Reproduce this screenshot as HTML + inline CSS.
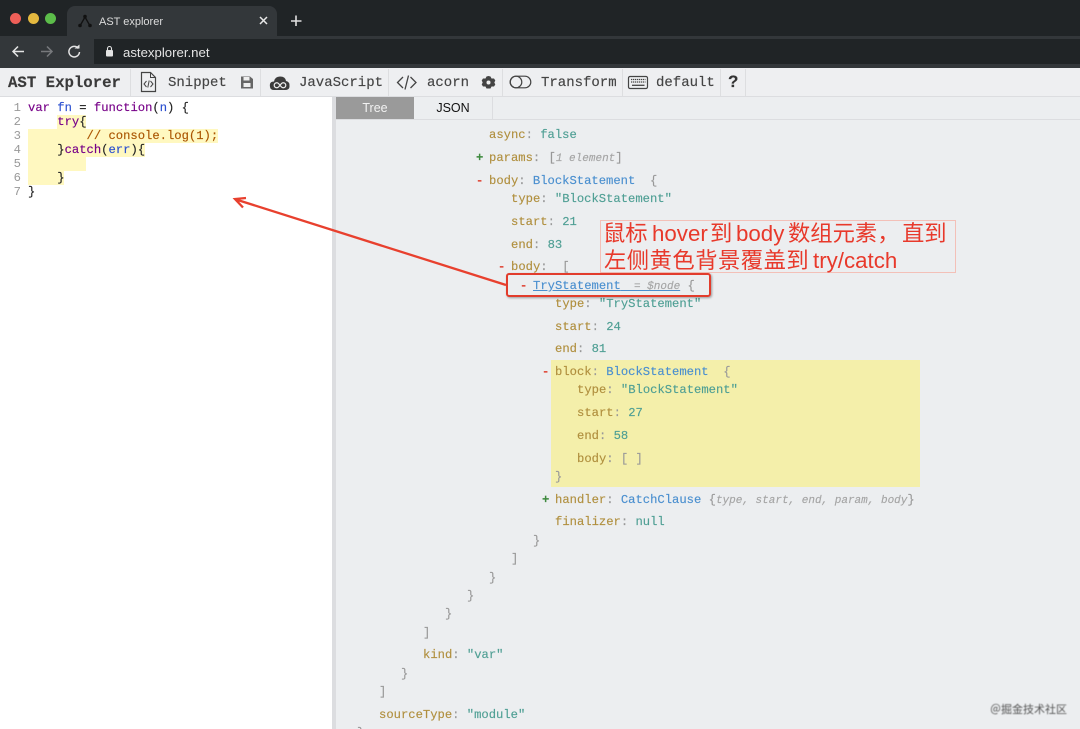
<!DOCTYPE html>
<html><head><meta charset="utf-8"><style>
html,body{margin:0;padding:0;width:1080px;height:729px;overflow:hidden}
body{position:relative;background:#eceef0;font-family:"Liberation Mono",monospace}
#w{position:absolute;left:0;top:0;width:1080px;height:729px;overflow:hidden;background:#eceef0}
#w div{position:absolute}
.l{white-space:pre;font:12.2px/16px "Liberation Mono",monospace;color:#999;margin-top:1px;-webkit-text-stroke:.15px currentColor}
.k{color:#b08f3e}.v{color:#4f9f94}.t{color:#4a8fcf}.g{color:#a3a3a3}.i{font-style:italic;color:#a5a5a5;font-size:11px}
.m,.p{position:absolute;left:-13px;font-weight:bold}
.m{color:#e04a3a}.p{color:#3f8a3f}
.c{left:28px;white-space:pre;font:12.2px/14px "Liberation Mono",monospace;color:#222;-webkit-text-stroke:.15px currentColor}
.n{width:21px;text-align:right;left:0;font:12.2px/14px "Liberation Mono",monospace;color:#999}
.h{background:#fff8c0}
.tb{top:74px;white-space:pre;font:14px/18px "Liberation Mono",monospace;color:#444;-webkit-text-stroke:.15px currentColor}
.sep{top:69px;width:1px;height:27px;background:#dddee0}
.kw{color:#708}.d{color:#2a4fd0}.cm{color:#a50}
.a{font:22.3px/26px "Liberation Sans","Noto Sans CJK SC",sans-serif;color:#e8392b;white-space:pre}
</style></head><body><div id="w">
<!-- browser chrome -->
<div style="left:0;top:0;width:1080px;height:68px;background:#202426"></div>
<div style="left:0;top:36px;width:1080px;height:3px;background:#33373a"></div>
<div style="left:0;top:64px;width:1080px;height:4px;background:#33373a"></div>
<div style="left:0;top:36px;width:94px;height:28px;background:#33373a"></div>
<div style="left:67px;top:6px;width:210px;height:33px;background:#33373a;border-radius:8px 8px 0 0"></div>
<div style="left:94px;top:39px;width:986px;height:25px;background:#202426;border-radius:12px 0 0 12px"></div>
<div style="left:10px;top:13px;width:11px;height:11px;border-radius:50%;background:#ee5f58"></div>
<div style="left:28px;top:13px;width:11px;height:11px;border-radius:50%;background:#e4b93f"></div>
<div style="left:45px;top:13px;width:11px;height:11px;border-radius:50%;background:#5cbd4a"></div>
<svg style="position:absolute;left:0;top:0" width="340" height="68" fill="none">
<path d="M85 17L80.500 25M85 17L89.500 25" stroke="#111" stroke-width="1.300"/>
<circle cx="85" cy="16.500" r="1.800" fill="#111"/><circle cx="80" cy="25.500" r="1.800" fill="#111"/><circle cx="90" cy="25.500" r="1.800" fill="#111"/>
<path d="M260 17L267 24M267 17L260 24" stroke="#e8e8e8" stroke-width="1.500"/>
<path d="M296 15.500V26M291 21H301.500" stroke="#e0e0e0" stroke-width="1.600"/>
<path d="M24 51.500H13M18 46.500L13 51.500L18 56.500" stroke="#e4e4e4" stroke-width="1.500"/>
<path d="M41 51.500H52M47 46.500L52 51.500L47 56.500" stroke="#77797c" stroke-width="1.500"/>
<path d="M78.500 48.500A5.300 5.300 0 1 0 79.500 52" stroke="#e4e4e4" stroke-width="1.500"/>
<path d="M74.500 48.500H79.500V44.500Z" fill="#e4e4e4"/>
<rect x="106" y="50" width="7" height="6.500" rx="1" fill="#e4e4e4"/>
<path d="M107.500 50V48.500A2 2 0 0 1 111.500 48.500V50" stroke="#e4e4e4" stroke-width="1.100"/>
</svg>
<div style="left:99px;top:15px;font:11px/14px 'Liberation Sans',sans-serif;color:#dcdcdc;white-space:pre">AST explorer</div>
<div style="left:123px;top:45px;font:13.2px/16px 'Liberation Sans',sans-serif;color:#e4e4e4;white-space:pre">astexplorer.net</div>

<!-- toolbar -->
<div style="left:0;top:68px;width:1080px;height:28px;background:#eeeff1;border-bottom:1px solid #dcdde0"></div>
<div class="tb" style="left:8px;top:74px;font-weight:bold;font-size:15.7px;color:#3a3a3a">AST Explorer</div>
<div class="sep" style="left:130px"></div><div class="sep" style="left:260px"></div><div class="sep" style="left:388px"></div><div class="sep" style="left:502px"></div><div class="sep" style="left:622px"></div><div class="sep" style="left:720px"></div><div class="sep" style="left:745px"></div>
<div class="tb" style="left:168px">Snippet</div>
<div class="tb" style="left:299px">JavaScript</div>
<div class="tb" style="left:427px">acorn</div>
<div class="tb" style="left:541px">Transform</div>
<div class="tb" style="left:656px">default</div>
<div class="tb" style="left:728px;top:73px;font-weight:bold;font-size:17px;font-family:'Liberation Sans',sans-serif;color:#333">?</div>
<svg style="position:absolute;left:0;top:68px" width="760" height="28" fill="none" stroke="#444">
<path d="M141.500 4.500H150.500L155.500 9.500V23.500H141.500Z" stroke-width="1.200"/><path d="M150.500 4.500V9.500H155.500" stroke-width="1"/>
<path d="M146.500 13L144 16L146.500 19M150.500 13L153 16L150.500 19M149.200 12.500L147.800 19.500" stroke-width="1"/>
<path d="M241 8.500H250L253 11V20.500H241Z" fill="#666" stroke="none"/><rect x="243.500" y="9" width="6" height="3.500" fill="#eee" stroke="none"/><rect x="243.500" y="15" width="7" height="4" fill="#eee" stroke="none"/>
<path d="M270 19Q269 13.500 274 13.500Q275 8.500 280 8.500Q285.500 8.500 286 13Q290 13.500 289.500 19Q289 22 285 22H274Q270.500 22 270 19Z" fill="#3c3c3c" stroke="none"/>
<path d="M278.500 15.500A2.500 2.500 0 1 0 278.500 19L281.500 15.500A2.500 2.500 0 1 1 281.500 19Z" stroke="#eee" stroke-width="1.200"/>
<path d="M403 9L397.500 14.500L403 20M410.500 9L416 14.500L410.500 20M408.500 7.500L405 21.500" stroke-width="1.300"/>
<path d="M488.500 8L490.500 8.500L491.500 10.500L494 10.500L495.300 12.500L494.300 14.500L495.300 16.500L494 18.500L491.500 18.500L490.500 20.500L486.500 20.500L485.500 18.500L483 18.500L481.700 16.500L482.700 14.500L481.700 12.500L483 10.500L485.500 10.500L486.500 8.500Z" fill="#444" stroke="none"/><circle cx="488.500" cy="14.500" r="2" fill="#eee" stroke="none"/>
<circle cx="516" cy="14" r="5.800" stroke-width="1.200"/><rect x="510.200" y="8.200" width="20.600" height="11.600" rx="5.800" stroke-width="1.200"/>
<rect x="628.500" y="8.500" width="19" height="12" rx="1.500" stroke-width="1.200"/>
<path d="M631 11.500H645.500M631 14H645.500" stroke-width="1.200" stroke-dasharray="1.300 .7"/><path d="M632 17.300H644.500" stroke-width="1.300"/>
</svg>

<!-- editor -->
<div style="left:0;top:97px;width:332px;height:632px;background:#fff"></div>
<div style="left:332px;top:96px;width:4px;height:633px;background:#dcdde0"></div>
<div class="h" style="left:57px;top:115px;width:29px;height:14px"></div>
<div class="h" style="left:28px;top:129px;width:190px;height:14px"></div>
<div class="h" style="left:28px;top:143px;width:117px;height:14px"></div>
<div class="h" style="left:28px;top:157px;width:58px;height:14px"></div>
<div class="h" style="left:28px;top:171px;width:36px;height:14px"></div>
<div class="n" style="top:101px">1</div><div class="n" style="top:115px">2</div><div class="n" style="top:129px">3</div><div class="n" style="top:143px">4</div><div class="n" style="top:157px">5</div><div class="n" style="top:171px">6</div><div class="n" style="top:185px">7</div>
<div class="c" style="top:101px"><span class="kw">var</span> <span class="d">fn</span> = <span class="kw">function</span>(<span class="d">n</span>) {</div>
<div class="c" style="top:115px">    <span class="kw">try</span>{</div>
<div class="c" style="top:129px">        <span class="cm">// console.log(1);</span></div>
<div class="c" style="top:143px">    }<span class="kw">catch</span>(<span class="d">err</span>){</div>
<div class="c" style="top:171px">    }</div>
<div class="c" style="top:185px">}</div>

<!-- tabs -->
<div style="left:336px;top:97px;width:78px;height:22px;background:#9a9a9a;color:#f2f2f2;font:12.5px/23px 'Liberation Sans',sans-serif;text-align:center">Tree</div>
<div style="left:414px;top:97px;width:78px;height:22px;color:#111;font:12.5px/23px 'Liberation Sans',sans-serif;text-align:center;border-right:1px solid #dcdde0">JSON</div>
<div style="left:336px;top:119px;width:744px;height:1px;background:#dcdde0"></div>
<div style="left:551px;top:360px;width:369px;height:127px;background:#f4efaa"></div>

<!-- tree -->
<div class="l" style="left:489px;top:126px"><span class="k">async</span>: <span class="v">false</span></div>
<div class="l" style="left:489px;top:149px"><span class="p">+</span><span class="k">params</span>: <span style="margin-left:1px">[</span><span class="i">1 element</span>]</div>
<div class="l" style="left:489px;top:172px"><span class="m">-</span><span class="k">body</span>: <span class="t">BlockStatement</span>  {</div>
<div class="l" style="left:511px;top:190px"><span class="k">type</span>: <span class="v">"BlockStatement"</span></div>
<div class="l" style="left:511px;top:213px"><span class="k">start</span>: <span class="v">21</span></div>
<div class="l" style="left:511px;top:236px"><span class="k">end</span>: <span class="v">83</span></div>
<div class="l" style="left:511px;top:258px"><span class="m">-</span><span class="k">body</span>:  [</div>
<div class="l" style="left:533px;top:277px"><span class="m">-</span><span class="t" style="text-decoration:underline">TryStatement</span><span class="i" style="text-decoration:underline;text-decoration-color:#4a8fcf">  = $node</span> {</div>
<div class="l" style="left:555px;top:295px"><span class="k">type</span>: <span class="v">"TryStatement"</span></div>
<div class="l" style="left:555px;top:318px"><span class="k">start</span>: <span class="v">24</span></div>
<div class="l" style="left:555px;top:340px"><span class="k">end</span>: <span class="v">81</span></div>
<div class="l" style="left:555px;top:363px"><span class="m">-</span><span class="k">block</span>: <span class="t">BlockStatement</span>  {</div>
<div class="l" style="left:577px;top:381px"><span class="k">type</span>: <span class="v">"BlockStatement"</span></div>
<div class="l" style="left:577px;top:404px"><span class="k">start</span>: <span class="v">27</span></div>
<div class="l" style="left:577px;top:427px"><span class="k">end</span>: <span class="v">58</span></div>
<div class="l" style="left:577px;top:450px"><span class="k">body</span>: [ ]</div>
<div class="l" style="left:555px;top:468px">}</div>
<div class="l" style="left:555px;top:491px"><span class="p">+</span><span class="k">handler</span>: <span class="t">CatchClause</span> {<span class="i">type, start, end, param, body</span>}</div>
<div class="l" style="left:555px;top:513px"><span class="k">finalizer</span>: <span class="v">null</span></div>
<div class="l" style="left:533px;top:532px">}</div>
<div class="l" style="left:511px;top:550px">]</div>
<div class="l" style="left:489px;top:569px">}</div>
<div class="l" style="left:467px;top:587px">}</div>
<div class="l" style="left:445px;top:605px">}</div>
<div class="l" style="left:423px;top:624px">]</div>
<div class="l" style="left:423px;top:646px"><span class="k">kind</span>: <span class="v">"var"</span></div>
<div class="l" style="left:401px;top:665px">}</div>
<div class="l" style="left:379px;top:683px">]</div>
<div class="l" style="left:379px;top:706px"><span class="k">sourceType</span>: <span class="v">"module"</span></div>
<div class="l" style="left:357px;top:724px">}</div>

<!-- annotations -->
<div style="left:600px;top:220px;width:354px;height:51px;border:1px solid #f3c0b8"></div>
<div class="a" style="left:603px;top:221px">鼠标</div>
<div class="a" style="left:652px;top:221px">hover</div>
<div class="a" style="left:710px;top:221px">到</div>
<div class="a" style="left:736px;top:221px">body</div>
<div class="a" style="left:788px;top:221px">数组元素，</div>
<div class="a" style="left:902px;top:221px">直到</div>
<div class="a" style="left:604px;top:248px;letter-spacing:.5px">左侧黄色背景覆盖到</div>
<div class="a" style="left:813px;top:248px">try/catch</div>
<div style="left:506px;top:273px;width:201px;height:20px;border:2.5px solid #e23c2c;border-radius:3px;box-shadow:1px 1px 2px rgba(0,0,0,.35)"></div>
<svg style="position:absolute;left:0;top:0" width="1080" height="729" fill="none">
<path d="M506 285L236 199.500M246 198L235 199L243 207.500" stroke="#e8402e" stroke-width="2.300"/>
</svg>
<div style="left:990px;top:703px;font:11px/14px 'Liberation Sans','Noto Sans CJK SC',sans-serif;color:#555;white-space:pre;filter:blur(.4px)">＠掘金技术社区</div>
</div></body></html>
